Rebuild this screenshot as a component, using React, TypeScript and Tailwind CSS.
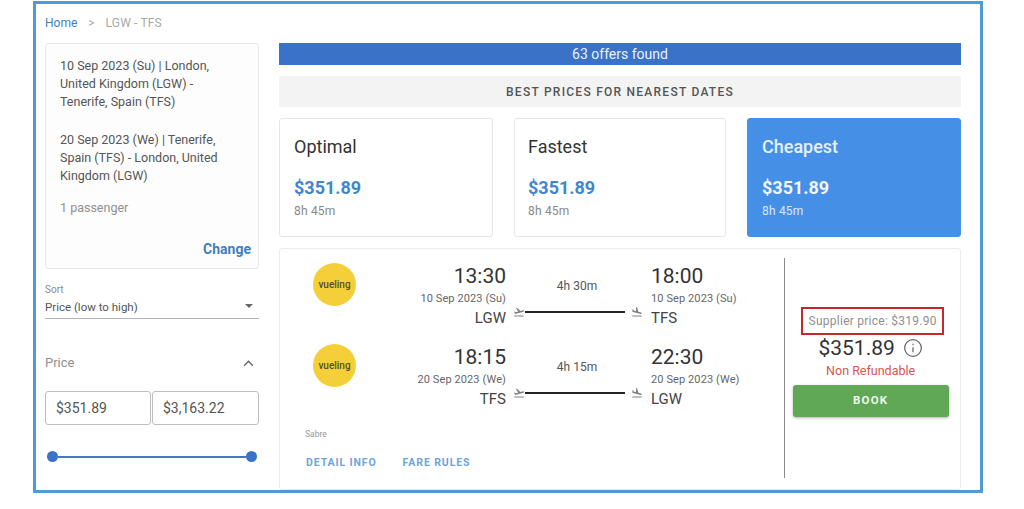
const TAKEOFF = "M2.5 19h19v2h-19zm19.57-9.36c-.21-.8-1.04-1.28-1.84-1.06L14.92 10l-6.9-6.43-1.93.51 4.14 7.17-4.97 1.33-1.97-1.54-1.45.39 2.59 4.49L21 11.49c.81-.23 1.28-1.05 1.07-1.85z";
const LANDING = "M2.5 19h19v2h-19zm7.18-5.73l4.35 1.16 5.31 1.42c.8.21 1.62-.26 1.84-1.06.21-.8-.26-1.62-1.06-1.84l-5.31-1.42-2.76-9.02L10.12 2v8.28L5.15 8.95l-.93-2.32-1.45-.39v5.17l1.6.43 5.31 1.43z";

function Glyph({ d }: { d: string }) {
  return (
    <svg viewBox="0 0 24 24" className="h-[12px] w-[12px] shrink-0 fill-[#808080]">
      <path d={d} />
    </svg>
  );
}

function Flight({ dep, depDate, from, dur, arr, arrDate, to }: { dep: string; depDate: string; from: string; dur: string; arr: string; arrDate: string; to: string }) {
  return (
    <div className="flex h-[81px] items-start">
      <div className="flex w-[110px] justify-center pr-[1px]">
        <div className="flex h-[43px] w-[43px] items-center justify-center rounded-full bg-[#f4cf3a] text-[10px] font-medium text-[#55502a]">vueling</div>
      </div>
      <div className="w-[116px] text-right">
        <div className="text-[21px] leading-[26px] text-[#333333]">{dep}</div>
        <div className="mt-[3px] text-[11px] leading-[14px] tracking-[0.1px] text-[#666666]">{depDate}</div>
        <div className="mt-[2px] text-[15px] leading-[20px] text-[#444444]">{from}</div>
      </div>
      <div className="ml-[7px] w-[130px]">
        <div className="pt-[14px] pr-[2px] text-center text-[12px] leading-[18px] text-[#555555]">{dur}</div>
        <div className="mt-[11px] flex items-center">
          <Glyph d={TAKEOFF} />
          <div className="h-[2px] flex-1 bg-[#222222]" />
          <div className="w-[6px]" />
          <Glyph d={LANDING} />
        </div>
      </div>
      <div className="ml-[8px]">
        <div className="text-[21px] leading-[26px] text-[#333333]">{arr}</div>
        <div className="mt-[3px] text-[11px] leading-[14px] tracking-[0.1px] text-[#666666]">{arrDate}</div>
        <div className="mt-[2px] text-[15px] leading-[20px] text-[#444444]">{to}</div>
      </div>
    </div>
  );
}

function Offer({ title, active, wide }: { title: string; active?: boolean; wide?: boolean }) {
  return (
    <div className={`h-[119px] rounded-[3px] border pt-[15px] ${wide ? "w-[214px] px-[14px]" : "w-[212px] px-[13px]"} ${active ? "border-[#468fe6] bg-[#468fe6] text-white" : "border-[#e6e6e6] bg-white text-[#333333]"}`}>
      <div className={`text-[18px] leading-[26px] ${active ? "font-medium text-[#e6f1fd]" : ""}`}>{title}</div>
      <div className={`mt-[16px] text-[18px] font-bold leading-[24px] ${active ? "text-[#f2f7fd]" : "text-[#3f85d0]"}`}>$351.89</div>
      <div className={`mt-[3px] text-[12px] leading-[17px] tracking-[0.2px] ${active ? "text-[#d8e8fb]" : "text-[#888888]"}`}>8h 45m</div>
    </div>
  );
}

export default function App() {
  return (
    <div className="h-[509px] w-[1024px] overflow-hidden bg-white pt-px pl-[33px] font-['Roboto',sans-serif]">
      <div className="h-[492px] w-[950px] border-[3px] border-[#4f9bd6] bg-white pl-[9px]">
        <div className="flex h-[39px] items-start pt-[10px] text-[12px] leading-[18px]">
          <span className="text-[#3f7fbf]">Home</span>
          <span className="ml-[11px] text-[#aaaaaa]">&gt;</span>
          <span className="ml-[11px] tracking-[0.15px] text-[#a8a8a8]">LGW - TFS</span>
        </div>
        <div className="flex">
          <div className="w-[214px]">
            <div className="h-[226px] rounded-[3px] border border-[#e8e8e8] bg-[#fdfdfd] pt-[13px] pr-[30px] pl-[14px] text-[12.5px] leading-[18px] text-[#555555]">
              <div>10 Sep 2023 (Su) | London, United Kingdom (LGW) - Tenerife, Spain (TFS)</div>
              <div className="mt-[20px]">20 Sep 2023 (We) | Tenerife, Spain (TFS) - London, United Kingdom (LGW)</div>
              <div className="mt-[14px] text-[#909090]">1 passenger</div>
              <div className="mt-[22px] mr-[-23px] text-right text-[14px] font-bold leading-[20px] text-[#3f7fbf]">Change</div>
            </div>
            <div className="mt-[15px] text-[10px] leading-[12px] text-[#8a8a8a]">Sort</div>
            <div className="mt-[4px] flex h-[19px] items-start justify-between border-b border-[#b5b5b5] pr-[6px] text-[11.5px] leading-[14px] text-[#555555]">
              <span>Price (low to high)</span>
              <span className="mt-[4px] h-0 w-0 border-x-[4px] border-t-[4px] border-x-transparent border-t-[#666666]" />
            </div>
            <div className="mt-[35px] flex items-center justify-between pr-[5px] text-[13px] leading-[18px] text-[#8f8f8f]">
              <span>Price</span>
              <svg viewBox="0 0 12 8" className="h-[7px] w-[11px] fill-none stroke-[#666666] stroke-[1.6]">
                <path d="M1 6.5 6 1.5l5 5" />
              </svg>
            </div>
            <div className="mt-[19px] flex gap-px">
              <div className="flex h-[34px] w-[106px] items-center rounded-[3px] border border-[#bdbdbd] pl-[10px] text-[14px] text-[#555555]">$351.89</div>
              <div className="flex h-[34px] w-[107px] items-center rounded-[3px] border border-[#bdbdbd] pl-[10px] text-[14px] text-[#555555]">$3,163.22</div>
            </div>
            <div className="mt-[26px] flex items-center px-[2px]">
              <div className="h-[11px] w-[11px] shrink-0 rounded-full bg-[#3a72c8]" />
              <div className="h-[2px] flex-1 bg-[#4478c4]" />
              <div className="h-[11px] w-[11px] shrink-0 rounded-full bg-[#3a72c8]" />
            </div>
          </div>
          <div className="ml-[20px] w-[682px]">
            <div className="flex h-[22px] items-center justify-center bg-[#3a72c8] text-[14px] text-[#e9f1fb]">63 offers found</div>
            <div className="mt-[11px] flex h-[31px] items-center justify-center rounded-[2px] bg-[#f3f3f3] text-[12px] font-medium tracking-[1.25px] text-[#555555]">BEST PRICES FOR NEAREST DATES</div>
            <div className="mt-[11px] flex justify-between">
              <Offer title="Optimal" wide />
              <Offer title="Fastest" />
              <Offer title="Cheapest" active wide />
            </div>
            <div className="mt-[11px] flex h-[242px] rounded-[3px] border border-[#ececec] pt-[9px]">
              <div className="w-[505px]">
                <div className="pt-[5px]">
                  <Flight dep="13:30" depDate="10 Sep 2023 (Su)" from="LGW" dur="4h 30m" arr="18:00" arrDate="10 Sep 2023 (Su)" to="TFS" />
                  <Flight dep="18:15" depDate="20 Sep 2023 (We)" from="TFS" dur="4h 15m" arr="22:30" arrDate="20 Sep 2023 (We)" to="LGW" />
                </div>
                <div className="mt-[3px] pl-[25px] text-[8.5px] leading-[12px] text-[#999999]">Sabre</div>
                <div className="mt-[16px] flex gap-[26px] pl-[26px] text-[10.5px] font-bold leading-[14px] tracking-[0.9px] text-[#6ba5dc]">
                  <span>DETAIL INFO</span>
                  <span>FARE RULES</span>
                </div>
              </div>
              <div className="flex h-[220px] w-[176px] flex-col items-center border-l border-[#8a8a8a] pt-[49px] pr-[4px]">
                <div className="ml-[4px] flex h-[28px] w-[143px] items-center justify-center border-2 border-[#c4282a] text-[12px] tracking-[0.25px] text-[#8f8f8f]">Supplier price: $319.90</div>
                <div className="mt-px flex items-center text-[21px] leading-[24px] text-[#333333]">
                  <span>$351.89</span>
                  <svg viewBox="0 0 24 24" className="ml-[8px] h-[20px] w-[20px] fill-none stroke-[#666666] stroke-[1.5]">
                    <circle cx="12" cy="12" r="10" />
                    <path d="M12 11v6M12 7v1.6" />
                  </svg>
                </div>
                <div className="mt-[2px] text-[12.5px] leading-[18px] text-[#d9534f]">Non Refundable</div>
                <div className="mt-[5px] flex h-[32px] w-[156px] items-center justify-center rounded-[3px] bg-[#60a856] text-[11.5px] font-bold tracking-[1.2px] text-[#eef6ec] shadow-[0_1px_3px_rgba(0,0,0,0.3)]">BOOK</div>
              </div>
            </div>
          </div>
        </div>
      </div>
    </div>
  );
}
